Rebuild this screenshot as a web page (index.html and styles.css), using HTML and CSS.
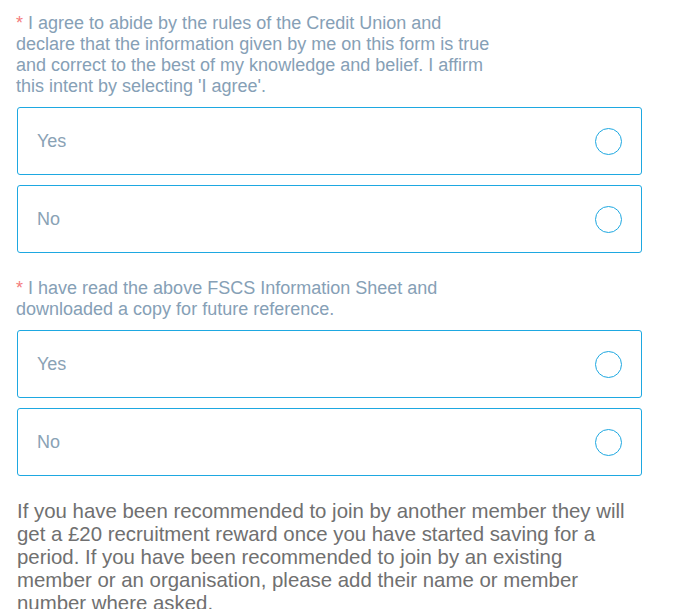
FILE: index.html
```html
<!DOCTYPE html>
<html>
<head>
<meta charset="utf-8">
<link rel="stylesheet" href="styles.css">
</head>
<body>
<div class="form">
  <div class="question">
    <p class="label"><span class="req">*</span> I agree to abide by the rules of the Credit Union and<br>declare that the information given by me on this form is true<br>and correct to the best of my knowledge and belief. I affirm<br>this intent by selecting 'I agree'.</p>
    <div class="options">
      <label class="option"><span class="opt-text">Yes</span><span class="radio"></span></label>
      <label class="option"><span class="opt-text">No</span><span class="radio"></span></label>
    </div>
  </div>
  <div class="question">
    <p class="label"><span class="req">*</span> I have read the above FSCS Information Sheet and<br>downloaded a copy for future reference.</p>
    <div class="options">
      <label class="option"><span class="opt-text">Yes</span><span class="radio"></span></label>
      <label class="option"><span class="opt-text">No</span><span class="radio"></span></label>
    </div>
  </div>
  <p class="info">If you have been recommended to join by another member they will get a £20 recruitment reward once you have started saving for a period. If you have been recommended to join by an existing member or an organisation, please add their name or member number where asked.</p>
</div>
</body>
</html>
```
FILE: styles.css
```css
html, body {
  margin: 0;
  padding: 0;
  background: #ffffff;
  overflow: hidden;
}
body {
  font-family: "Liberation Sans", Arial, sans-serif;
}
.form {
  padding: 13px 0 0 16px;
  width: 626px;
}
.question {
  margin-bottom: 24px;
}
.question:first-child {
  margin-bottom: 25px;
}
.label {
  margin: 0 0 10px 0;
  font-size: 18px;
  line-height: 21px;
  color: #86a0b6;
}
.req {
  color: #f47c7c;
}
.options {
  display: flex;
  flex-direction: column;
  gap: 10px;
}
.option {
  display: flex;
  align-items: center;
  justify-content: space-between;
  height: 66px;
  margin-left: 1px;
  border: 1px solid #1ea8e1;
  border-radius: 3px;
  padding: 0 19px 0 19px;
  box-sizing: content-box;
  width: 585px;
}
.opt-text {
  font-size: 18px;
  color: #8aa2b5;
}
.radio {
  width: 25px;
  height: 25px;
  border: 1.5px solid #1ea8e1;
  border-radius: 50%;
}
.info {
  margin: 0 0 0 1px;
  font-size: 20.4px;
  line-height: 23px;
  color: #707070;
  width: 614px;
}
```
